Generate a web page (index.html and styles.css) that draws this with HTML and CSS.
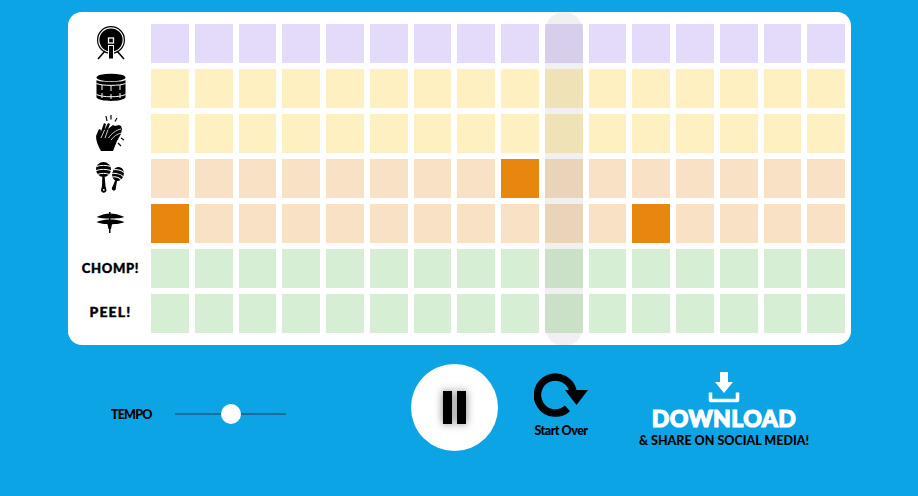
FILE: index.html
```html
<!DOCTYPE html>
<html lang="en">
<head>
    <meta charset="UTF-8">
    <title>Beat Maker</title>
    <link rel="stylesheet" href="styles.css">
</head>
<body>
    <div class="board">
        <div class="playhead"></div>

        <div class="row purple">
            <div class="label">
                <svg class="icon" width="30" height="34" viewBox="0 0 30 34">
                    <circle cx="15" cy="14" r="13.4" fill="none" stroke="#000" stroke-width="1.2"/>
                    <circle cx="15" cy="14" r="11.6" fill="#000"/>
                    <path d="M9 25 2 33M21 25 28 33" stroke="#000" stroke-width="1.5" fill="none"/>
                    <rect x="12.500" y="12" width="5" height="5" fill="none" stroke="#fff" stroke-width="1.3"/>
                    <rect x="12.500" y="19.500" width="5" height="13.500" fill="#000" stroke="#fff" stroke-width="1"/>
                </svg>
            </div>
            <div class="cell"></div><div class="cell"></div><div class="cell"></div><div class="cell"></div>
            <div class="cell"></div><div class="cell"></div><div class="cell"></div><div class="cell"></div>
            <div class="cell"></div><div class="cell"></div><div class="cell"></div><div class="cell"></div>
            <div class="cell"></div><div class="cell"></div><div class="cell"></div><div class="cell"></div>
        </div>

        <div class="row yellow">
            <div class="label">
                <svg class="icon" width="30" height="30" viewBox="0 0 30 30">
                    <ellipse cx="15" cy="4.500" rx="14.500" ry="3.800" fill="#000"/>
                    <path d="M.5 7C3 9.500 27 9.500 29.500 7V24.500C27 29 3 29 .5 24.500Z" fill="#000"/>
                    <path d="M.5 10.500C6 13 24 13 29.500 10.500M.5 21.500C6 24.500 24 24.500 29.500 21.500" stroke="#fff" stroke-width="1" fill="none"/>
                    <path d="M6 12V17M15 13V18M24 12V17M6 20V25M15 21V26M24 20V25" stroke="#fff" stroke-width="1" fill="none"/>
                </svg>
            </div>
            <div class="cell"></div><div class="cell"></div><div class="cell"></div><div class="cell"></div>
            <div class="cell"></div><div class="cell"></div><div class="cell"></div><div class="cell"></div>
            <div class="cell"></div><div class="cell"></div><div class="cell"></div><div class="cell"></div>
            <div class="cell"></div><div class="cell"></div><div class="cell"></div><div class="cell"></div>
        </div>

        <div class="row yellow">
            <div class="label">
                <svg class="icon" width="30" height="38" viewBox="0 0 30 38">
                    <path d="M5 37C2 32 0 27 0 22L3 15 5 16 4.500 19 8 9 10 10 8.500 16 12 9 14 10 12 15 17 11 19 12 23 11 25 12 26 15 25 20 21 27 17 37Z" fill="#000"/>
                    <path d="M5 24 8.500 16M9 24 12 15.500M12.500 24C15 20 20 16 25 15M15 26C18 22 21 20 25.500 19" stroke="#fff" stroke-width=".8" fill="none"/>
                    <path d="M10 2 11 7M15 1V5.500M21 4 19 7.500M25 24 28 26M22 29 25 32" stroke="#000" stroke-width="1.200" fill="none"/>
                </svg>
            </div>
            <div class="cell"></div><div class="cell"></div><div class="cell"></div><div class="cell"></div>
            <div class="cell"></div><div class="cell"></div><div class="cell"></div><div class="cell"></div>
            <div class="cell"></div><div class="cell"></div><div class="cell"></div><div class="cell"></div>
            <div class="cell"></div><div class="cell"></div><div class="cell"></div><div class="cell"></div>
        </div>

        <div class="row peach">
            <div class="label">
                <svg class="icon" width="30" height="32" viewBox="0 0 30 32">
                    <ellipse cx="7.500" cy="7.500" rx="7.500" ry="7.400" fill="#000"/>
                    <path d="M.5 4.500C4 3 11 3 14.500 4.500M0 8.500C5 7 10 7 15 8.500M1.500 12.500C5 11 10 11 13.500 12.500" stroke="#fff" stroke-width="1" fill="none"/>
                    <path d="M6.300 14.500H8.700L9.500 24 10.500 28C10.500 31.500 5 31.500 5 28L6 24Z" fill="#000"/>
                    <circle cx="7.800" cy="27.800" r=".9" fill="#fff"/>
                    <g transform="rotate(16 22 12)">
                        <ellipse cx="22" cy="12" rx="5.800" ry="7" fill="#000"/>
                        <path d="M16.800 9C19 7.500 25 7.500 27.200 9M16.300 13C19 11.500 25 11.500 27.700 13M17.500 16.500C20 15 24 15 26.500 16.500" stroke="#fff" stroke-width="1" fill="none"/>
                        <path d="M21 18.500H23L23.500 24 24 27C24 30 20 30 20 27L20.500 24Z" fill="#000"/>
                    </g>
                </svg>
            </div>
            <div class="cell"></div><div class="cell"></div><div class="cell"></div><div class="cell"></div>
            <div class="cell"></div><div class="cell"></div><div class="cell"></div><div class="cell"></div>
            <div class="cell on"></div><div class="cell"></div><div class="cell"></div><div class="cell"></div>
            <div class="cell"></div><div class="cell"></div><div class="cell"></div><div class="cell"></div>
        </div>

        <div class="row peach">
            <div class="label">
                <svg class="icon" width="30" height="22" viewBox="0 0 30 22">
                    <path d="M13 0H14.500V21H13Z" fill="#000"/>
                    <path d="M.5 5C6 2.500 10 1.500 14 1.500 18 1.500 23 2.500 28.500 5 23 7 6 7 .5 5Z" fill="#000"/>
                    <path d="M.5 10C6 8 10 7.500 14 7.500 18 7.500 23 8 28.500 10 23 13 6 13 .5 10Z" fill="#000"/>
                    <path d="M11.500 12H16L15 17H12.500Z" fill="#000"/>
                </svg>
            </div>
            <div class="cell on"></div><div class="cell"></div><div class="cell"></div><div class="cell"></div>
            <div class="cell"></div><div class="cell"></div><div class="cell"></div><div class="cell"></div>
            <div class="cell"></div><div class="cell"></div><div class="cell"></div><div class="cell on"></div>
            <div class="cell"></div><div class="cell"></div><div class="cell"></div><div class="cell"></div>
        </div>

        <div class="row green">
            <div class="label"><span class="word chomp">CHOMP!</span></div>
            <div class="cell"></div><div class="cell"></div><div class="cell"></div><div class="cell"></div>
            <div class="cell"></div><div class="cell"></div><div class="cell"></div><div class="cell"></div>
            <div class="cell"></div><div class="cell"></div><div class="cell"></div><div class="cell"></div>
            <div class="cell"></div><div class="cell"></div><div class="cell"></div><div class="cell"></div>
        </div>

        <div class="row green">
            <div class="label"><span class="word peel">PEEL!</span></div>
            <div class="cell"></div><div class="cell"></div><div class="cell"></div><div class="cell"></div>
            <div class="cell"></div><div class="cell"></div><div class="cell"></div><div class="cell"></div>
            <div class="cell"></div><div class="cell"></div><div class="cell"></div><div class="cell"></div>
            <div class="cell"></div><div class="cell"></div><div class="cell"></div><div class="cell"></div>
        </div>
    </div>

    <div class="controls">
        <div class="tempo">
            <label for="tempo">TEMPO</label>
            <input type="range" id="tempo" min="0" max="100" value="50">
        </div>

        <button class="pause" aria-label="Pause">
            <span class="bar"></span>
            <span class="bar"></span>
        </button>

        <div class="restart">
            <svg width="54" height="47" viewBox="0 0 54 47">
                <path d="M39 20A18 18 0 1 0 33.500 37.400" fill="none" stroke="#000" stroke-width="7.500"/>
                <path d="M31 19H54L42.500 34Z" fill="#000"/>
            </svg>
            <span>Start Over</span>
        </div>

        <div class="download">
            <svg width="32" height="32" viewBox="0 0 32 32">
                <path d="M12 1H20V11H25L16 22 7 11H12Z" fill="#fff"/>
                <path d="M2.500 21.500V29.500H29.500V21.500" fill="none" stroke="#fff" stroke-width="3.500" stroke-linejoin="round"/>
            </svg>
            <div class="download-title">DOWNLOAD</div>
            <div class="download-sub">&amp; SHARE ON SOCIAL MEDIA!</div>
        </div>
    </div>
</body>
</html>
```

FILE: styles.css
```css
body {
    margin: 0;
    height: 496px;
    overflow: hidden;
    background-color: #0da4e5;
    font-family: Lato, "Open Sans", sans-serif;
    color: #000;
}
.board {
    position: relative;
    box-sizing: border-box;
    width: 783px;
    height: 333px;
    margin: 12px 0 0 68px;
    padding: 12px 6px 0 8px;
    background-color: #fff;
    border-radius: 14px;
    display: flex;
    flex-direction: column;
    gap: 6.500px;
}
.playhead {
    position: absolute;
    top: 0;
    left: 477px;
    width: 38px;
    height: 334px;
    border-radius: 19px;
    background-color: rgba(60, 60, 60, 0.08);
}
.row {
    display: grid;
    grid-template-columns: 69px repeat(16, 1fr);
    column-gap: 6px;
    height: 38.500px;
}
.label {
    display: flex;
    align-items: center;
    justify-content: center;
}
.purple .cell { background-color: #e4dbfa; }
.yellow .cell { background-color: #fef0c0; }
.peach .cell { background-color: #f8e1c5; }
.green .cell { background-color: #d6eed3; }
.row .cell.on { background-color: #e8870e; }
.word {
    font-weight: 900;
    font-size: 13px;
    letter-spacing: 0.7px;
    -webkit-text-stroke: 0.4px #000;
    margin-bottom: 1px;
}
.peel {
    font-size: 14px;
    letter-spacing: 1.200px;
    margin-bottom: 3px;
}
.controls {
    display: flex;
    align-items: flex-start;
    margin-top: 19px;
    padding-left: 111px;
}
.tempo {
    display: flex;
    align-items: center;
    gap: 24px;
    width: 175px;
    margin: 40px 125px 0 0;
}
.tempo label {
    flex: none;
    width: 40px;
    font-weight: 900;
    font-size: 12.500px;
    letter-spacing: -0.8px;
    white-space: nowrap;
}
.tempo input {
    -webkit-appearance: none;
    appearance: none;
    flex: none;
    width: 111px;
    height: 20px;
    margin: 0;
    background: transparent;
}
.tempo input::-webkit-slider-runnable-track {
    height: 2px;
    background-color: #1c6c9b;
}
.tempo input::-webkit-slider-thumb {
    -webkit-appearance: none;
    width: 20px;
    height: 20px;
    margin-top: -9px;
    border-radius: 50%;
    background-color: #fff;
}
.pause {
    flex: none;
    width: 87px;
    height: 87px;
    margin-right: 36px;
    padding: 0;
    border: none;
    border-radius: 50%;
    background-color: #fff;
    display: flex;
    align-items: center;
    justify-content: center;
    gap: 5px;
}
.bar {
    width: 9px;
    height: 33px;
    background-color: #000;
    box-shadow: 0 0 8px rgba(0, 0, 0, 0.5);
}
.restart {
    flex: none;
    width: 54px;
    margin: 7px 51px 0 0;
    display: flex;
    flex-direction: column;
    align-items: center;
    gap: 5px;
}
.restart svg {
    display: block;
}
.restart span {
    font-weight: 900;
    font-size: 12.500px;
    letter-spacing: -0.5px;
    white-space: nowrap;
}
.download {
    flex: none;
    width: 170px;
    margin-top: 7px;
    display: flex;
    flex-direction: column;
    align-items: center;
}
.download-title {
    margin-top: 1px;
    font-weight: 900;
    font-size: 23px;
    line-height: 28px;
    color: #fff;
    -webkit-text-stroke: 1.200px #fff;
    letter-spacing: 0.4px;
}
.download-sub {
    margin-top: 1px;
    font-weight: 900;
    font-size: 12.500px;
    line-height: 16px;
    white-space: nowrap;
}
```
